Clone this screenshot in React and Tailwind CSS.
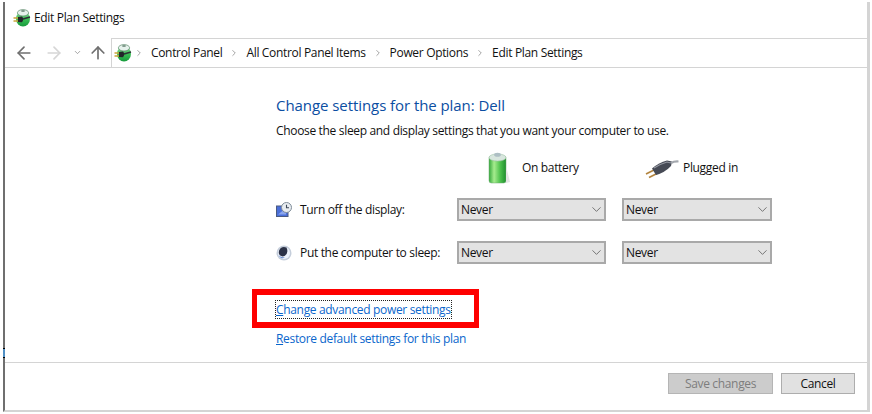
import { ArrowLeft, ArrowRight, ArrowUp, ChevronDown, ChevronRight } from 'lucide-react';

const PlanIcon = ({ size }) => (
    <svg width={size} height={size} viewBox="0 0 18 18">
        <defs>
            <linearGradient id={`plan${size}`} x1="0" y1="0" x2="0" y2="1">
                <stop offset="0" stopColor="#9be0aa" />
                <stop offset="0.5" stopColor="#3cc056" />
                <stop offset="1" stopColor="#159a3b" />
            </linearGradient>
        </defs>
        <ellipse cx="10" cy="9.8" rx="7" ry="7.8" fill={`url(#plan${size})`} />
        <ellipse cx="10" cy="3.8" rx="5.6" ry="3.2" fill="#e6f2ec" stroke="#5d8a6c" strokeWidth="0.7" />
        <ellipse cx="10" cy="2" rx="2" ry="1.1" fill="#7c9688" />
        <path d="M0.5 9h5M0.5 12h5" stroke="#c9a53a" strokeWidth="1.3" />
        <path d="M5 8 L9 7.4 Q11.4 10 9 13.2 L5 13Z" fill="#23262b" />
        <path d="M10 10 L17 8" stroke="#2d3136" strokeWidth="1.6" />
    </svg>
);

const BatteryIcon = () => (
    <svg width="24" height="32" viewBox="0 0 24 32">
        <defs>
            <linearGradient id="batt" x1="0" y1="0" x2="1" y2="0">
                <stop offset="0" stopColor="#35a83c" />
                <stop offset="0.3" stopColor="#a6ec8e" />
                <stop offset="0.65" stopColor="#4fc24e" />
                <stop offset="1" stopColor="#1f8f2e" />
            </linearGradient>
        </defs>
        <rect x="2" y="4" width="17" height="27" rx="2.5" fill="url(#batt)" stroke="#6cab70" strokeWidth="0.5" />
        <ellipse cx="10.5" cy="5.5" rx="8.5" ry="3.6" fill="#d8e6de" stroke="#9fc2a8" strokeWidth="0.6" />
        <ellipse cx="10.5" cy="2.8" rx="3.4" ry="2" fill="#aebfc4" />
        <path d="M19 14 L23 30 L19 31Z" fill="#e4e4e4" />
    </svg>
);

const PlugIcon = () => (
    <svg width="34" height="22" viewBox="0 0 34 22">
        <path d="M1 17 L9 13" stroke="#b2843e" strokeWidth="1.6" />
        <path d="M4 20.5 L12 16.5" stroke="#b2843e" strokeWidth="1.6" />
        <path d="M7 11.5 Q14 5.5 22 3.5 L27 4.5 L26 9 Q20 15.5 11 18Z" fill="#464a55" />
        <path d="M9 11 Q15 7 22 5 L26 6" stroke="#9599a2" strokeWidth="1.1" fill="none" />
        <path d="M26 6 Q29 4.2 33.5 4.5" stroke="#a3a7ad" strokeWidth="2.2" fill="none" />
    </svg>
);

const DisplayIcon = () => (
    <svg width="16" height="16" viewBox="0 0 16 16">
        <rect x="0.5" y="4" width="11.5" height="10.5" fill="#4a6fd8" stroke="#4a5a80" />
        <path d="M2 12.5 L10 6 V12.5Z" fill="#8ba6ee" />
        <circle cx="10.5" cy="5.5" r="5" fill="#e8ecf0" stroke="#7f8c98" />
        <path d="M10.5 2.8V5.8H13" stroke="#3f4a58" strokeWidth="1.1" fill="none" />
    </svg>
);

const SleepIcon = () => (
    <svg width="16" height="16" viewBox="0 0 16 16">
        <circle cx="8" cy="8" r="7.5" fill="#c5cedb" />
        <circle cx="8" cy="8" r="6" fill="#eef3fc" />
        <path d="M3 9 A6 6 0 0 1 4.5 3.2 A6 6 0 0 1 10.5 2.6 Q13 8 8.5 11 Q5 12.5 3 9Z" fill="#2c3247" />
        <path d="M2.8 10 Q5 13 9 12 Q7 14 5 13 Q3.3 12 2.8 10Z" fill="#6f8fd0" />
    </svg>
);

const Crumb = ({ children }) => (
    <>
        <ChevronRight size={10} strokeWidth={1.5} className="text-[#6d6d6d]" />
        <span>{children}</span>
    </>
);

const Select = () => (
    <div className="flex h-[23px] items-center justify-between border-2 border-[#a9a9a9] bg-[#e3e3e3] pl-[2px]">
        <span>Never</span>
        <ChevronDown size={15} strokeWidth={1} className="text-[#333]" />
    </div>
);

const App = () => {
    return (
        <div className="h-[414px] w-[872px] bg-white pt-[2px] text-[12px] text-[#111] font-['Open_Sans',sans-serif]">
            <div className="relative ml-[3px] mr-[1px] flex h-[410px] w-[867px] flex-col border-b-2 border-l-2 border-r-3 border-[#d4d4d4] border-l-[#6f6f6f]">
                <div className="flex h-[36px] items-center gap-[3px] pb-[4px] pl-[8px] tracking-[-0.33px]">
                    <PlanIcon size={18} />
                    <span>Edit Plan Settings</span>
                </div>
                <div className="flex h-[30px] items-center border-b border-[#d4d4d4] pl-[9px]">
                    <ArrowLeft size={20} strokeWidth={2} className="text-[#6f6f6f]" />
                    <ArrowRight size={20} strokeWidth={2} className="ml-[10px] text-[#d6d6d6]" />
                    <ChevronDown size={9} strokeWidth={2} className="ml-[9px] text-[#8a8a8a]" />
                    <ArrowUp size={20} strokeWidth={2} className="ml-[6px] text-[#6f6f6f]" />
                    <div className="ml-[3px] flex h-[30px] flex-1 items-center gap-[7px] border-l border-t border-[#d4d4d4] pl-[2px] tracking-[-0.33px]">
                        <div className="-mr-[5px]">
                            <PlanIcon size={18} />
                        </div>
                        <Crumb>Control Panel</Crumb>
                        <Crumb>All Control Panel Items</Crumb>
                        <Crumb>Power Options</Crumb>
                        <Crumb>Edit Plan Settings</Crumb>
                    </div>
                </div>
                <div className="flex-1 pl-[271px] pt-[27px] tracking-[-0.33px]">
                    <h1 className="text-[15px] leading-[20px] tracking-[-0.065px] text-[#0b4ea2]">Change settings for the plan: Dell</h1>
                    <p className="mt-[8px] leading-[16px]">Choose the sleep and display settings that you want your computer to use.</p>
                    <div className="mt-[12px] grid grid-cols-[165px_149px_150px] items-center gap-x-[16px]">
                        <div className="h-[34px]" />
                        <div className="flex items-center gap-[11px] pl-[30px]">
                            <BatteryIcon />
                            <span>On battery</span>
                        </div>
                        <div className="flex items-center gap-[4px] pl-[23px]">
                            <PlugIcon />
                            <span>Plugged in</span>
                        </div>
                    </div>
                    <div className="mt-[13px] grid grid-cols-[165px_149px_150px] items-center gap-x-[16px] gap-y-[20px]">
                        <div className="flex items-center gap-[8px]">
                            <DisplayIcon />
                            <span>Turn off the display:</span>
                        </div>
                        <Select />
                        <Select />
                        <div className="flex items-center gap-[8px]">
                            <SleepIcon />
                            <span>Put the computer to sleep:</span>
                        </div>
                        <Select />
                        <Select />
                    </div>
                    <div className="mt-[37px] leading-[17px] text-[#0a66cc]">
                        <a className="outline-1 outline-dotted outline-[#222]"><u>C</u>hange advanced power settings</a>
                    </div>
                    <div className="mt-[12px] leading-[17px] text-[#0a66cc]">
                        <a><u>R</u>estore default settings for this plan</a>
                    </div>
                </div>
                <div className="flex h-[48px] items-start justify-end gap-[8px] border-t border-[#d4d4d4] pr-[12px] pt-[10px] tracking-[-0.33px]">
                    <button className="h-[21px] w-[105px] border border-[#b5b5b5] bg-[#cccccc] text-[#7d7d7d]">Save changes</button>
                    <button className="h-[21px] w-[74px] border border-[#adadad] bg-[#e1e1e1]">Cancel</button>
                </div>
                <div className="absolute left-[247px] top-[287px] h-[39px] w-[227px] border-x-[5px] border-y-[6px] border-[#fe0000]" />
                <div className="absolute -left-[2px] top-[346px] h-[10px] w-[2px] border-y border-black bg-[#4f8fc4]" />
            </div>
        </div>
    );
};

export default App;
